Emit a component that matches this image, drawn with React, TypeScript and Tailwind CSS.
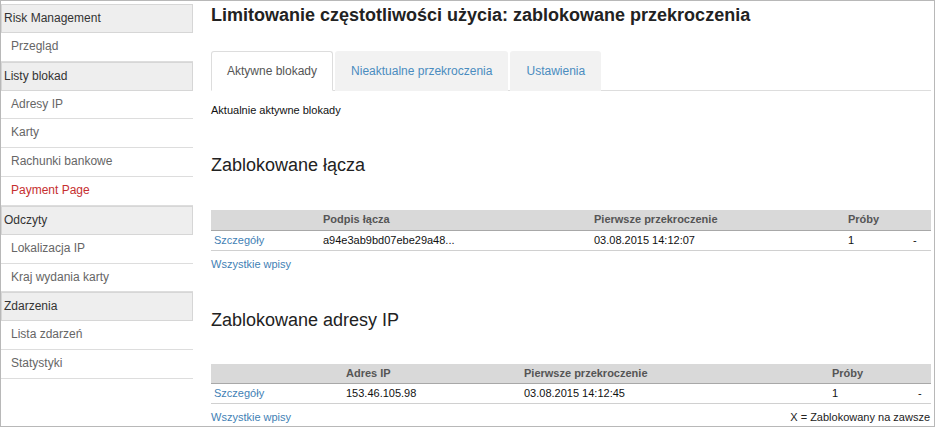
import React from 'react';

type NavItem = { label: string; header?: boolean; active?: boolean };

const nav: NavItem[] = [
  { label: 'Risk Management', header: true },
  { label: 'Przegląd' },
  { label: 'Listy blokad', header: true },
  { label: 'Adresy IP' },
  { label: 'Karty' },
  { label: 'Rachunki bankowe' },
  { label: 'Payment Page', active: true },
  { label: 'Odczyty', header: true },
  { label: 'Lokalizacja IP' },
  { label: 'Kraj wydania karty' },
  { label: 'Zdarzenia', header: true },
  { label: 'Lista zdarzeń' },
  { label: 'Statystyki' },
];

const tabs = ['Aktywne blokady', 'Nieaktualne przekroczenia', 'Ustawienia'];

type Block = {
  title: string;
  cols: string[];
  widths: string[];
  row: string[];
};

const blocks: Block[] = [
  {
    title: 'Zablokowane łącza',
    cols: ['', 'Podpis łącza', 'Pierwsze przekroczenie', 'Próby', ''],
    widths: ['w-[109px]', 'w-[271px]', 'w-[254px]', 'w-[65px]', 'w-[21px]'],
    row: ['a94e3ab9bd07ebe29a48...', '03.08.2015 14:12:07', '1', '-'],
  },
  {
    title: 'Zablokowane adresy IP',
    cols: ['', 'Adres IP', 'Pierwsze przekroczenie', 'Próby', ''],
    widths: ['w-[132px]', 'w-[178px]', 'w-[308px]', 'w-[86px]', 'w-[16px]'],
    row: ['153.46.105.98', '03.08.2015 14:12:45', '1', '-'],
  },
];

const Sidebar: React.FC = () => (
  <div className="w-[192px] shrink-0 pt-[3px]">
    {nav.map((n) =>
      n.header ? (
        <div
          key={n.label}
          className="h-[28.85px] border border-[#d6d6d6] bg-[#eeeeee] pl-[2px] text-[12px] leading-[26.85px] text-[#333]"
        >
          {n.label}
        </div>
      ) : (
        <div
          key={n.label}
          className={`h-[28.85px] border-b border-[#dddddd] pl-[10px] text-[12px] leading-[27.85px] ${
            n.active ? 'text-[#c62f2f]' : 'text-[#666]'
          }`}
        >
          {n.label}
        </div>
      )
    )}
  </div>
);

const BlockTable: React.FC<{ b: Block; last?: boolean }> = ({ b, last }) => (
  <div>
    <h2 className="text-[18px] leading-[20px] text-[#222]">{b.title}</h2>
    <table className={`${last ? 'mt-[34px]' : 'mt-[35px]'} w-[720px] table-fixed border-collapse text-[11px]`}>
      <colgroup>
        {b.widths.map((w, i) => (
          <col key={i} className={w} />
        ))}
      </colgroup>
      <thead>
        <tr className="h-[20px] bg-[#d9d9d9] border-b border-[#a8a8a8]">
          {b.cols.map((c, i) => (
            <th key={i} className="px-[3px] text-left font-bold leading-[19px] text-[#555]">
              {c}
            </th>
          ))}
        </tr>
      </thead>
      <tbody>
        <tr className="h-[20px] border-b border-[#d0d0d0]">
          <td className="px-[3px] leading-[19px] text-[#3f7fb5]">Szczegóły</td>
          {b.row.map((c, i) => (
            <td key={i} className="px-[3px] leading-[19px] text-[#111]">
              {c}
            </td>
          ))}
        </tr>
      </tbody>
    </table>
    <div className="mt-[6px] flex justify-between text-[11px] leading-[14px]">
      <span className="text-[#3f7fb5]">Wszystkie wpisy</span>
      {last && <span className="pr-[1px] text-[#222]">X = Zablokowany na zawsze</span>}
    </div>
  </div>
);

const App: React.FC = () => {
  return (
    <div
      className="flex h-[427px] w-[935px] border border-[#b8b8b8] bg-white"
      style={{ fontFamily: "'Liberation Sans', Arial, sans-serif" }}
    >
      <Sidebar />
      <div className="ml-[18px] w-[720px]">
        <h1 className="mt-[4px] text-[18px] font-bold leading-[20px] text-[#222]">
          Limitowanie częstotliwości użycia: zablokowane przekroczenia
        </h1>
        <div className="mt-[26px] flex border-b border-[#dddddd]">
          {tabs.map((t, i) => (
            <div
              key={t}
              className={`-mb-px mr-[2px] px-[15px] pt-[11px] pb-[11px] text-[12px] leading-[16px] rounded-t-[3px] ${
                i === 0
                  ? 'border border-[#dddddd] border-b-white bg-white text-[#555]'
                  : 'border border-transparent bg-[#f2f2f2] text-[#4a8cbf]'
              }`}
            >
              {t}
            </div>
          ))}
        </div>
        <p className="mt-[12px] text-[11px] leading-[14px] text-[#111]">Aktualnie aktywne blokady</p>
        <div className="mt-[38px]">
          <BlockTable b={blocks[0]} />
        </div>
        <div className="mt-[39px]">
          <BlockTable b={blocks[1]} last />
        </div>
      </div>
    </div>
  );
};

export default App;
